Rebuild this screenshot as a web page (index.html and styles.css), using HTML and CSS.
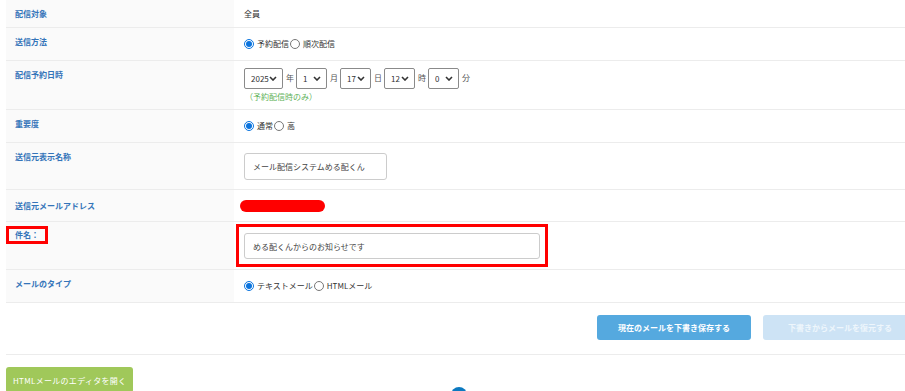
FILE: index.html
```html
<!DOCTYPE html>
<html>
<head>
  <title>メール配信</title>
  <meta name="viewport" content="width=device-width, initial-scale=1.0">
  <link rel="stylesheet" href="styles.css">
</head>
<body>
  <div class="page">
    <div class="form-table">
      <div class="row h28">
        <div class="label">配信対象</div>
        <div class="value">全員</div>
      </div>
      <div class="row h33">
        <div class="label">送信方法</div>
        <div class="value">
          <label class="radio"><input type="radio" name="method" checked>予約配信</label>
          <label class="radio"><input type="radio" name="method">順次配信</label>
        </div>
      </div>
      <div class="row h49">
        <div class="label">配信予約日時</div>
        <div class="value stack">
          <div class="date-line">
            <span class="sel-wrap"><select class="sel sel-year"><option>2025</option></select><svg class="chev" viewBox="0 0 8 5"><path d="M1 1l3 3 3-3" /></svg></span><span class="unit">年</span>
            <span class="sel-wrap"><select class="sel"><option>1</option></select><svg class="chev" viewBox="0 0 8 5"><path d="M1 1l3 3 3-3" /></svg></span><span class="unit">月</span>
            <span class="sel-wrap"><select class="sel"><option>17</option></select><svg class="chev" viewBox="0 0 8 5"><path d="M1 1l3 3 3-3" /></svg></span><span class="unit">日</span>
            <span class="sel-wrap"><select class="sel"><option>12</option></select><svg class="chev" viewBox="0 0 8 5"><path d="M1 1l3 3 3-3" /></svg></span><span class="unit">時</span>
            <span class="sel-wrap"><select class="sel"><option>0</option></select><svg class="chev" viewBox="0 0 8 5"><path d="M1 1l3 3 3-3" /></svg></span><span class="unit">分</span>
          </div>
          <div class="note">（予約配信時のみ）</div>
        </div>
      </div>
      <div class="row h33">
        <div class="label">重要度</div>
        <div class="value">
          <label class="radio"><input type="radio" name="prio" checked>通常</label>
          <label class="radio"><input type="radio" name="prio">高</label>
        </div>
      </div>
      <div class="row h47">
        <div class="label">送信元表示名称</div>
        <div class="value">
          <input class="text-input name-input" type="text" value="メール配信システムめる配くん">
        </div>
      </div>
      <div class="row h32">
        <div class="label label-low">送信元メールアドレス</div>
        <div class="value">
          <span class="redacted"></span>
        </div>
      </div>
      <div class="row h48">
        <div class="label label-tight"><span class="mark">件名：</span></div>
        <div class="value">
          <div class="mark-box">
            <input class="text-input subject-input" type="text" value="める配くんからのお知らせです">
          </div>
        </div>
      </div>
      <div class="row h33">
        <div class="label">メールのタイプ</div>
        <div class="value">
          <label class="radio"><input type="radio" name="type" checked>テキストメール</label>
          <label class="radio"><input type="radio" name="type">HTMLメール</label>
        </div>
      </div>
    </div>

    <div class="actions">
      <button class="btn btn-blue">現在のメールを下書き保存する</button>
      <button class="btn btn-pale">下書きからメールを復元する</button>
    </div>

    <div class="bottom">
      <button class="btn btn-green">HTMLメールのエディタを開く</button>
      <span class="to-top"></span>
    </div>
  </div>
</body>
</html>
```

FILE: styles.css
```css
body {
  margin: 0;
  font-family: "Noto Sans CJK JP", "Noto Sans", sans-serif;
  font-size: 8px;
  color: #333;
  background-color: #fff;
  overflow: hidden;
}

.page {
  width: 911px;
  padding-left: 6px;
}

.row {
  display: grid;
  grid-template-columns: 228px 1fr;
  border-bottom: 1px solid #ececec;
  box-sizing: border-box;
}

.h28 { height: 28px; }
.h32 { height: 32px; }
.h33 { height: 33px; }
.h47 { height: 47px; }
.h48 { height: 48px; }
.h49 { height: 49px; }

.label {
  background-color: #fafafa;
  color: #3474b9;
  font-weight: bold;
  line-height: 12px;
  padding: 8px 9px 0;
}

.label-low {
  padding-top: 10px;
}

.label-tight {
  padding-top: 4px;
}

.mark {
  display: inline-block;
  margin-left: -9px;
  padding: 0 6px;
  line-height: 12px;
  border: 3px solid #f00;
}

.value {
  display: flex;
  align-items: center;
  padding-left: 10px;
  line-height: 12px;
}

.stack {
  flex-direction: column;
  align-items: flex-start;
  justify-content: center;
}

.radio {
  display: inline-flex;
  align-items: center;
  margin-right: 1px;
}

.radio input {
  width: 10px;
  height: 10px;
  margin: 0 3px 0 0;
  accent-color: #0b74de;
}

.date-line {
  display: flex;
  align-items: center;
}

.sel-wrap {
  position: relative;
  display: inline-block;
  height: 21px;
}

.sel {
  appearance: none;
  -webkit-appearance: none;
  box-sizing: border-box;
  width: 31px;
  height: 21px;
  font-family: inherit;
  font-size: 8px;
  color: #333;
  border: 1px solid #8a8a8a;
  border-radius: 2px;
  background-color: #fff;
  padding: 0 0 0 6px;
  margin: 0;
  display: block;
}

.sel-year {
  width: 39px;
}

.chev {
  position: absolute;
  right: 6px;
  top: 8px;
  width: 8px;
  height: 5px;
  pointer-events: none;
}

.chev path {
  fill: none;
  stroke: #333;
  stroke-width: 1.6;
}

.unit {
  margin: 0 2px 0 3px;
  color: #555;
}

.note {
  color: #5fb35a;
  margin-top: 2px;
  margin-left: 1px;
}

.text-input {
  box-sizing: border-box;
  font-family: inherit;
  font-size: 8px;
  color: #444;
  border: 1px solid #ccc;
  border-radius: 3px;
  padding: 0 8px;
  background: #fff;
}

.name-input {
  width: 143px;
  height: 27px;
}

.subject-input {
  width: 296px;
  height: 26px;
  display: block;
}

.redacted {
  display: inline-block;
  width: 85px;
  height: 12px;
  margin-left: -4px;
  background-color: #f00;
  border-radius: 6px;
}

.mark-box {
  margin-left: -8px;
  padding: 6px 5px 5px 5px;
  border: 3px solid #f00;
}

.actions {
  display: flex;
  justify-content: flex-end;
  gap: 12px;
  height: 52px;
  padding-top: 12px;
  box-sizing: border-box;
  border-bottom: 1px solid #ececec;
}

.btn {
  font-family: inherit;
  font-size: 8px;
  font-weight: bold;
  color: #fff;
  border: none;
  border-radius: 3px;
  cursor: pointer;
  white-space: nowrap;
}

.btn-blue {
  width: 154px;
  height: 25px;
  background-color: #55a9df;
}

.btn-pale {
  width: 154px;
  height: 25px;
  background-color: #cde3f5;
  color: #eef6fc;
}

.bottom {
  position: relative;
  padding-top: 12px;
}

.btn-green {
  width: 127px;
  height: 26px;
  background-color: #a0c85a;
  font-weight: normal;
  letter-spacing: 0.3px;
  text-align: left;
  padding: 0 0 0 7px;
}

.to-top {
  position: absolute;
  left: 445px;
  top: 32px;
  width: 16px;
  height: 16px;
  border-radius: 50%;
  background-color: #0b79c0;
}
```
